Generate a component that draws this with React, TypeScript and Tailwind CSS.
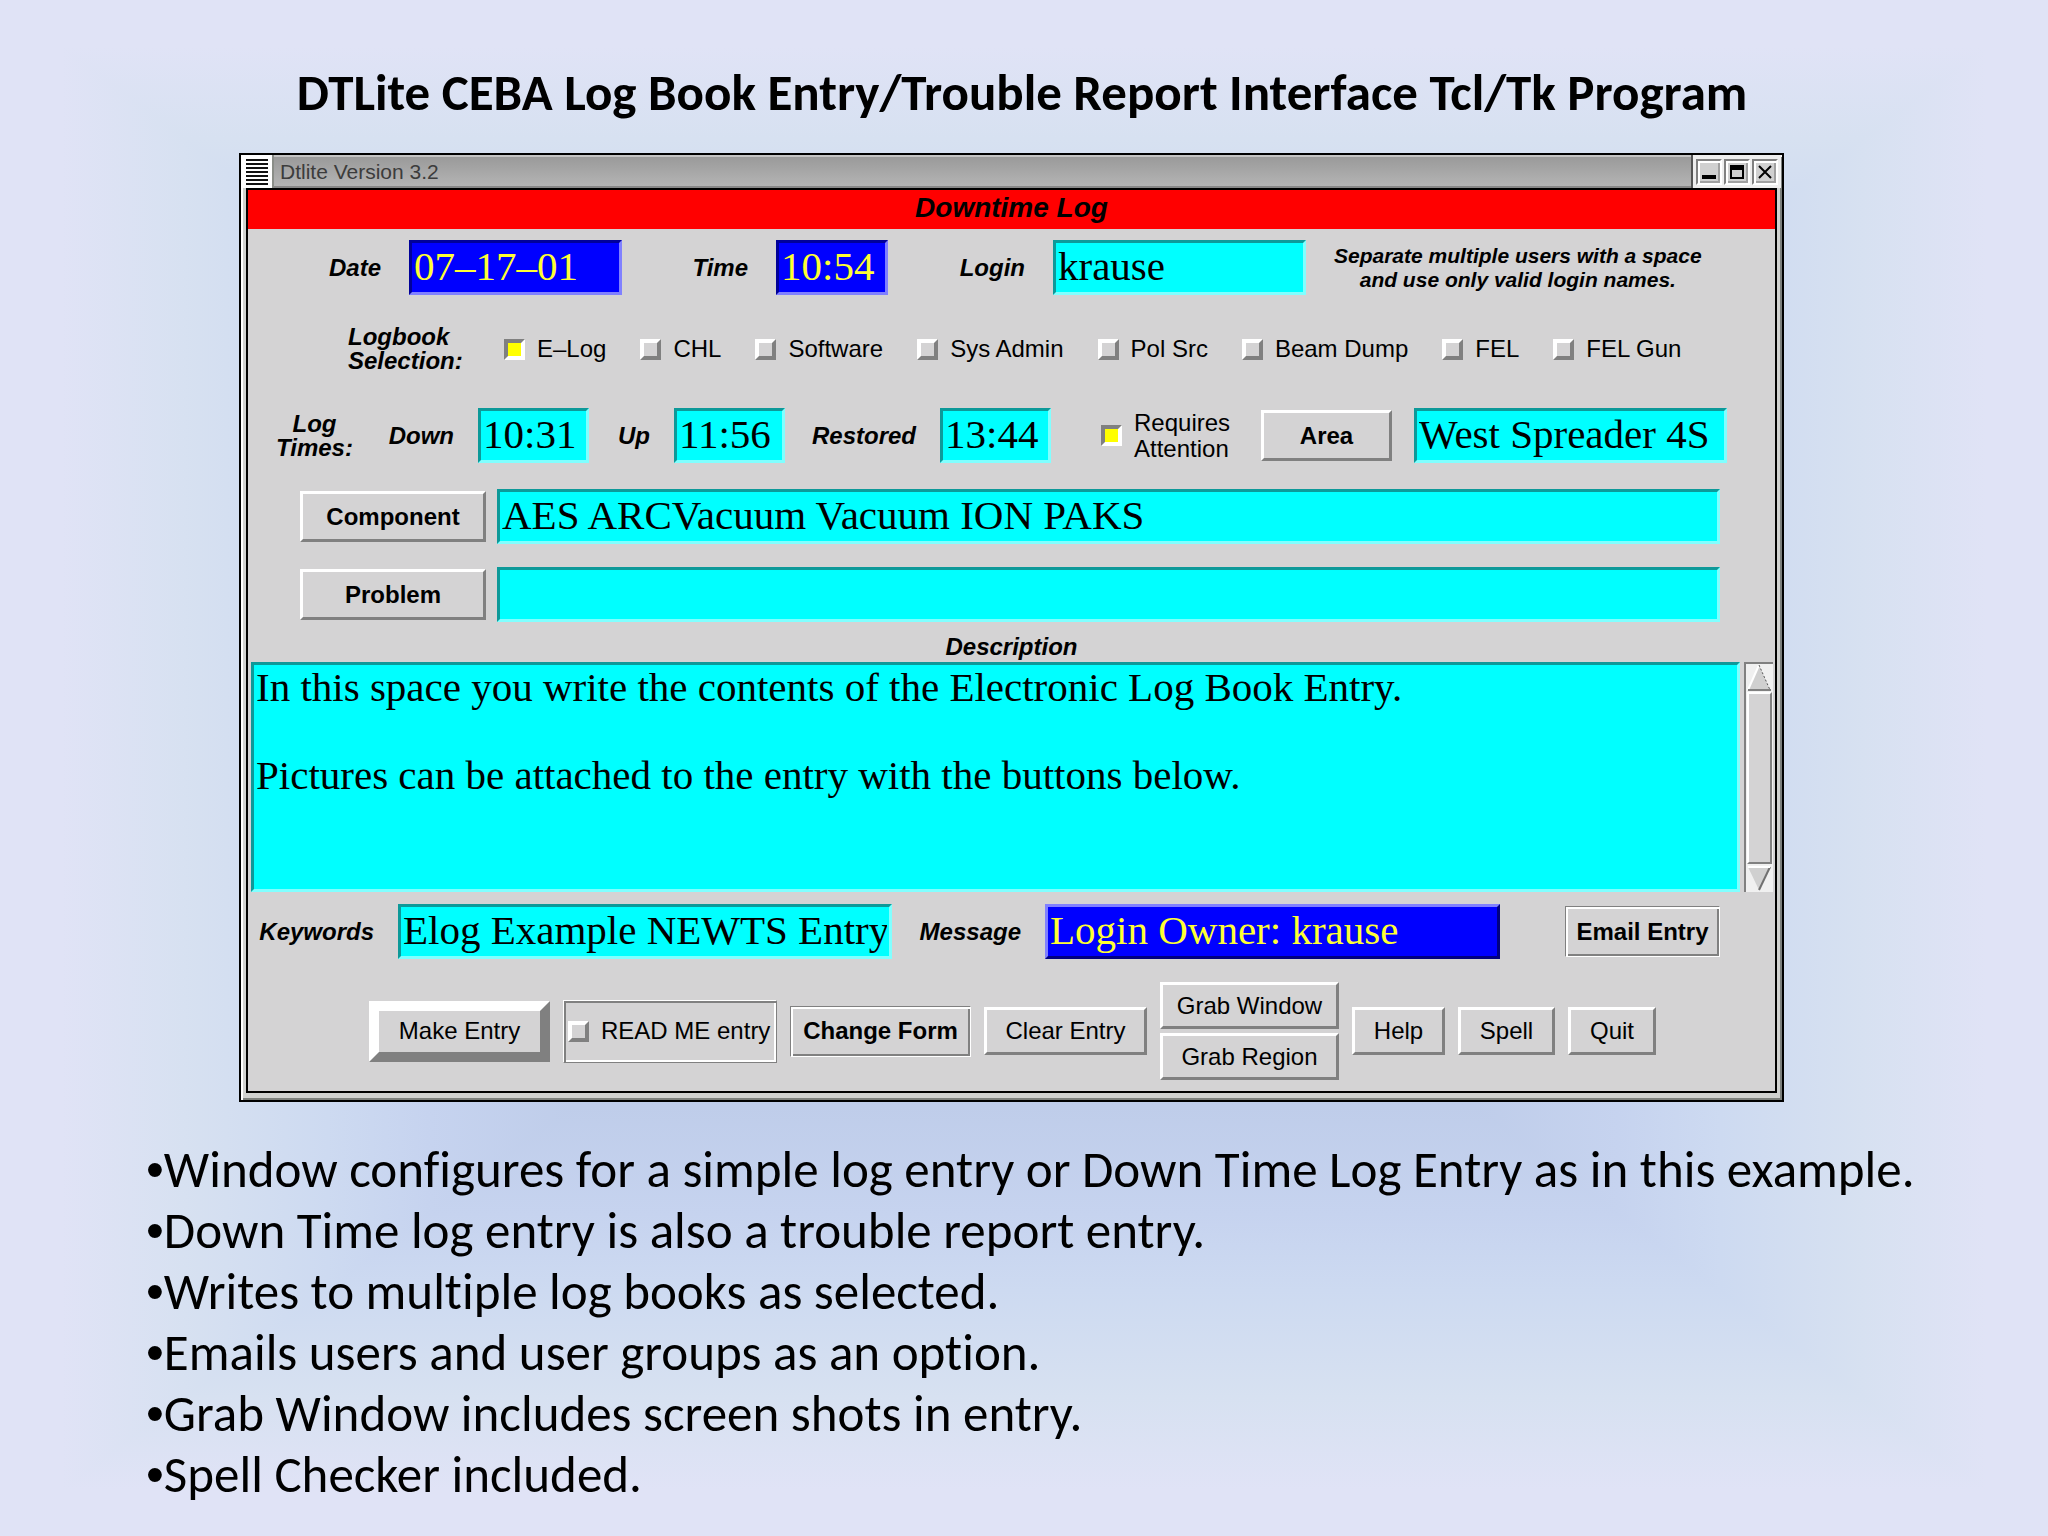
import type { ComponentProps, ReactNode } from "react";
import clsx from "clsx";

const logbooks = ["E–Log", "CHL", "Software", "Sys Admin", "Pol Src", "Beam Dump", "FEL", "FEL Gun"];

const notes = [
  "Window configures for a simple log entry or Down Time Log Entry as in this example.",
  "Down Time log entry is also a trouble report entry.",
  "Writes to multiple log books as selected.",
  "Emails users and user groups as an option.",
  "Grab Window includes screen shots in entry.",
  "Spell Checker included.",
];

const fieldTones = {
  cyan: "bg-[#00ffff] text-black border-t-[#0d9999] border-l-[#0d9999] border-b-[#80ffff] border-r-[#80ffff]",
  blue: "bg-[#0000ff] text-[#ffff33] border-t-[#000099] border-l-[#000099] border-b-[#8080ff] border-r-[#8080ff]",
  raised: "bg-[#0000ff] text-[#ffff33] border-t-[#8080ff] border-l-[#8080ff] border-b-[#000080] border-r-[#000080]",
};

function Field({ tone = "cyan", className, ...props }: ComponentProps<"input"> & { tone?: keyof typeof fieldTones }) {
  return (
    <input
      type="text"
      className={clsx(
        "h-[55px] min-w-0 rounded-none border-3 px-0.5 pb-1 font-['Liberation_Serif',serif] text-[41px] leading-[44px] outline-none",
        fieldTones[tone],
        className,
      )}
      {...props}
    />
  );
}

function FieldLabel({ className, ...props }: ComponentProps<"label">) {
  return <label className={clsx("shrink-0 text-right font-bold italic", className)} {...props} />;
}

function Check({ label, className, checked }: { label: ReactNode; className?: string; checked?: boolean }) {
  return (
    <label className={clsx("flex shrink-0 items-center gap-3", className)}>
      <input
        type="checkbox"
        defaultChecked={checked}
        className="size-[21px] shrink-0 appearance-none border-4 border-t-white border-r-[#808080] border-b-[#808080] border-l-white bg-[#d4d3d4] checked:border-t-[#808080] checked:border-r-white checked:border-b-white checked:border-l-[#808080] checked:bg-[#ffff00]"
      />
      <span>{label}</span>
    </label>
  );
}

function Button({ className, ...props }: ComponentProps<"button">) {
  return (
    <button
      type="button"
      className={clsx(
        "flex shrink-0 items-center justify-center border-t-white border-r-[#808080] border-b-[#808080] border-l-white whitespace-nowrap",
        className,
      )}
      {...props}
    />
  );
}

function GrooveButton({ className, ...props }: ComponentProps<"button">) {
  return (
    <button
      type="button"
      className={clsx(
        "flex h-[51px] shrink-0 items-center justify-center border border-t-[#808080] border-r-white border-b-white border-l-[#808080] font-bold whitespace-nowrap shadow-[inset_2px_2px_0_#fff,inset_-2px_-2px_0_#808080]",
        className,
      )}
      {...props}
    />
  );
}

function TitleButton({ label, children }: { label: string; children: ReactNode }) {
  return (
    <button
      type="button"
      aria-label={label}
      className="flex size-[26px] items-center justify-center border-2 border-t-[#808080] border-r-white border-b-white border-l-[#808080] bg-[#d0d0d0] shadow-[inset_2px_2px_0_#fff,inset_-2px_-2px_0_#a0a0a0]"
    >
      <svg viewBox="0 0 14 14" className="size-3.5" fill="none" stroke="black" strokeWidth="2">
        {children}
      </svg>
    </button>
  );
}

function TitleBar() {
  return (
    <div className="-mx-1 flex h-[33px] items-stretch">
      <button type="button" aria-label="Window menu" className="flex w-8 items-center border-r-2 border-r-[#8a8d88] bg-white pl-1">
        <span className="h-[26px] w-[22px] bg-[repeating-linear-gradient(to_bottom,#111_0px,#111_2px,#fff_2px,#fff_4px)]" />
      </button>
      <div className="flex flex-1 items-center border-t-2 border-b-2 border-t-[#c4c4c4] border-b-[#888] bg-linear-to-b from-[#9a9a9a] to-[#b4b4b4] pl-1.5 text-[21px] text-[#3c3c3c]">
        Dtlite Version 3.2
      </div>
      <div className="flex items-center gap-0.5 border-l-2 border-l-[#555] bg-[#eee] px-[3px]">
        <TitleButton label="Minimize">
          <path d="M0 12h14" strokeWidth="4" />
        </TitleButton>
        <TitleButton label="Maximize">
          <path d="M1 1h12v12H1z" />
          <path d="M0 3h14" strokeWidth="4" />
        </TitleButton>
        <TitleButton label="Close">
          <path d="M1 1l12 12M13 1L1 13" />
        </TitleButton>
      </div>
    </div>
  );
}

function ScrollBar() {
  return (
    <div className="flex w-[29px] shrink-0 flex-col items-center border-t-2 border-l-2 border-t-[#808080] border-l-[#808080] bg-[#f0f0f0]">
      <button type="button" aria-label="Scroll up">
        <svg viewBox="0 0 25 28" className="h-7 w-[25px]" fill="none">
          <path d="M12 1L1 26h22z" fill="#d0d0d0" />
          <path d="M12 1L1 26" stroke="white" strokeWidth="2" />
          <path d="M12 1l11 25" stroke="#555" strokeWidth="1" strokeDasharray="2 2" />
          <path d="M1 26h23" stroke="#808080" strokeWidth="2" />
        </svg>
      </button>
      <div className="w-[25px] flex-1 border-2 border-t-white border-r-[#808080] border-b-[#808080] border-l-white bg-[#d4d3d4]" />
      <button type="button" aria-label="Scroll down">
        <svg viewBox="0 0 25 28" className="h-7 w-[25px]" fill="none">
          <path d="M1 3h22L12 26z" fill="#d0d0d0" />
          <path d="M23 3L12 26" stroke="#707070" strokeWidth="2" />
          <path d="M1 3h22" stroke="white" strokeWidth="2" />
        </svg>
      </button>
    </div>
  );
}

function LogForm() {
  return (
    <form className="flex flex-col border-2 border-black bg-[#d4d3d4] pb-[11px]">
      <h2 className="h-[39px] bg-[#ff0000] text-center text-[28px] leading-9 font-bold italic">Downtime Log</h2>

      <div className="mt-[11px] flex items-center">
        <FieldLabel htmlFor="date" className="mr-7 w-[133px]">Date</FieldLabel>
        <Field id="date" tone="blue" defaultValue="07–17–01" className="w-[213px]" />
        <FieldLabel htmlFor="time" className="mr-7 w-[126px]">Time</FieldLabel>
        <Field id="time" tone="blue" defaultValue="10:54" className="w-[112px]" />
        <FieldLabel htmlFor="login" className="mr-7 w-[137px]">Login</FieldLabel>
        <Field id="login" defaultValue="krause" className="w-[253px]" />
        <p className="ml-7 shrink-0 text-center text-[21px] leading-6 font-bold italic">
          Separate multiple users with a space
          <br />
          and use only valid login names.
        </p>
      </div>

      <fieldset className="mt-[30px] flex h-12 items-center pl-[100px]">
        <div className="w-[156px] shrink-0 leading-6 font-bold italic">
          Logbook
          <br />
          Selection:
        </div>
        <div className="flex gap-[34px]">
          {logbooks.map((name) => (
            <Check key={name} label={name} checked={name === "E–Log"} />
          ))}
        </div>
      </fieldset>

      <div className="mt-[35px] flex items-center">
        <div className="ml-7 w-[77px] shrink-0 text-center leading-6 font-bold italic">
          Log
          <br />
          Times:
        </div>
        <FieldLabel htmlFor="down" className="mr-6 w-[101px]">Down</FieldLabel>
        <Field id="down" defaultValue="10:31" className="w-[111px]" />
        <FieldLabel htmlFor="up" className="mr-6 w-[61px]">Up</FieldLabel>
        <Field id="up" defaultValue="11:56" className="w-[111px]" />
        <FieldLabel htmlFor="restored" className="mr-6 w-[131px]">Restored</FieldLabel>
        <Field id="restored" defaultValue="13:44" className="w-[111px]" />
        <Check
          checked
          className="ml-[50px] w-[148px] leading-[26px]"
          label={
            <>
              Requires
              <br />
              Attention
            </>
          }
        />
        <Button className="ml-3 h-[51px] w-[131px] border-3 font-bold">Area</Button>
        <Field aria-label="Area" defaultValue="West Spreader 4S" className="mr-12 ml-[22px] flex-1" />
      </div>

      <div className="mt-[26px] mr-[55px] ml-[52px] flex items-center gap-[11px]">
        <Button className="h-[51px] w-[186px] border-3 font-bold">Component</Button>
        <Field aria-label="Component" defaultValue="AES ARCVacuum Vacuum ION PAKS" className="flex-1" />
      </div>

      <div className="mt-[23px] mr-[55px] ml-[52px] flex items-center gap-[11px]">
        <Button className="h-[51px] w-[186px] border-3 font-bold">Problem</Button>
        <Field aria-label="Problem" defaultValue="" className="flex-1" />
      </div>

      <label htmlFor="description" className="flex h-10 items-end justify-center leading-[30px] font-bold italic">
        Description
      </label>
      <div className="flex h-[230px] gap-1 pr-0.5 pl-[3px]">
        <textarea
          id="description"
          className="min-w-0 flex-1 resize-none overflow-hidden border-3 border-t-[#0d9999] border-r-[#80ffff] border-b-[#80ffff] border-l-[#0d9999] bg-[#00ffff] px-0.5 font-['Liberation_Serif',serif] text-[41px] leading-[44px] outline-none"
          defaultValue={
            "In this space you write the contents of the Electronic Log Book Entry.\n\nPictures can be attached to the entry with the buttons below."
          }
        />
        <ScrollBar />
      </div>

      <div className="mt-3 flex items-center">
        <FieldLabel htmlFor="keywords" className="mr-6 w-[126px]">Keywords</FieldLabel>
        <Field id="keywords" defaultValue="Elog Example NEWTS Entry" className="w-[494px]" />
        <FieldLabel htmlFor="message" className="mr-6 w-[129px]">Message</FieldLabel>
        <Field id="message" tone="raised" defaultValue="Login Owner: krause" className="w-[455px]" />
        <GrooveButton className="ml-[65px] w-[155px]">Email Entry</GrooveButton>
      </div>

      <div className="mt-[23px] flex items-center gap-[13px] pl-[121px]">
        <Button className="h-[61px] w-[181px] border-10">Make Entry</Button>
        <div className="flex h-[63px] w-[214px] shrink-0 items-center border border-t-white border-r-[#808080] border-b-[#808080] border-l-white pl-1 shadow-[inset_2px_2px_0_#808080,inset_-2px_-2px_0_#fff]">
          <Check label="READ ME entry" />
        </div>
        <GrooveButton className="w-[181px]">Change Form</GrooveButton>
        <Button className="h-12 w-[163px] border-3">Clear Entry</Button>
        <div className="flex flex-col gap-1">
          <Button className="h-[47px] w-[179px] border-3">Grab Window</Button>
          <Button className="h-[47px] w-[179px] border-3">Grab Region</Button>
        </div>
        <Button className="h-12 w-[93px] border-3">Help</Button>
        <Button className="h-12 w-[97px] border-3">Spell</Button>
        <Button className="h-12 w-[88px] border-3">Quit</Button>
      </div>
    </form>
  );
}

export default function App() {
  return (
    <main className="min-h-screen bg-[linear-gradient(to_right,#e0e3f6_3%,#d7e1f1_9%,#cddaf1_16%,#c6d3ef_21%,#bfcdea_28%,#b6c6e7_50%,#bfcdea_72%,#c6d3ef_79%,#cddaf1_84%,#d7e1f1_91%,#e0e3f6_97%),linear-gradient(to_bottom,#e0e3f6_3%,#d7e1f1_9%,#cddaf1_16%,#c6d3ef_21%,#bfcdea_28%,#b6c6e7_50%,#bfcdea_72%,#c6d3ef_79%,#cddaf1_84%,#d7e1f1_91%,#e0e3f6_97%)] pt-[62px] font-['Carlito','Lato',sans-serif] text-[51px] text-black [font-variant-ligatures:none] bg-blend-lighten">
      <h1 className="pr-1 text-center leading-[62px] font-bold">
        DTLite CEBA Log Book Entry/Trouble Report Interface Tcl/Tk Program
      </h1>

      <section className="mt-[29px] mr-[264px] ml-[239px] border-2 border-black bg-[#d0d1cf] px-[5px] pb-[7px] font-['Liberation_Sans',sans-serif] text-2xl leading-7 shadow-[inset_2px_2px_0_#fff,inset_-2px_-2px_0_#7d807c]">
        <TitleBar />
        <LogForm />
      </section>

      <ul className="mt-[37px] pl-[146px] leading-[61px]">
        {notes.map((note) => (
          <li key={note}>
            <span className="font-['Liberation_Sans',sans-serif] leading-none">•</span>
            {note}
          </li>
        ))}
      </ul>
    </main>
  );
}
